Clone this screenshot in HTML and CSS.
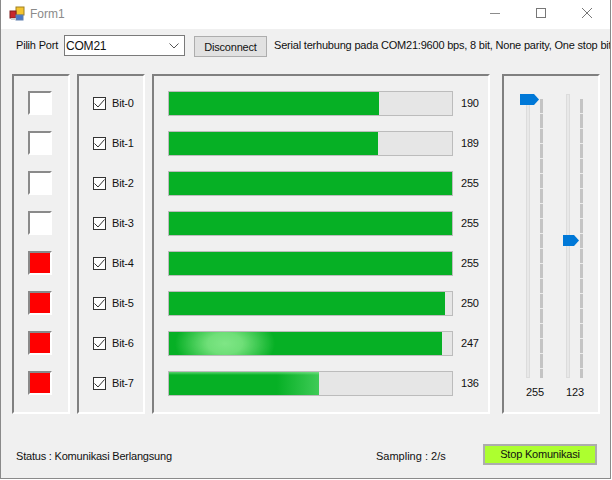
FILE: index.html
```html
<!DOCTYPE html>
<html lang="en">
<head>
    <meta charset="UTF-8">
    <title>Form1</title>
    <link rel="stylesheet" href="styles.css">
</head>
<body>
<div class="window">
    <div class="titlebar">
        <svg class="app-icon" width="16" height="16" viewBox="0 0 16 16">
            <rect x="7" y="1" width="8" height="8" fill="#f4c430" stroke="#a08020"/>
            <rect x="1" y="5" width="6" height="7" fill="#c8282c" stroke="#802020"/>
            <rect x="7" y="9" width="7" height="5" fill="#4a78c8" stroke="#6080b0"/>
            <rect x="2" y="12" width="5" height="2" fill="#d0d0d0"/>
        </svg>
        <span class="title">Form1</span>
        <div class="caption-buttons">
            <svg class="caption-btn" width="46" height="29" viewBox="0 0 46 29"><path d="M18 13.5h10" stroke="#8c8c8c" fill="none"/></svg>
            <svg class="caption-btn" width="46" height="29" viewBox="0 0 46 29"><rect x="18.5" y="8.5" width="9" height="9" stroke="#777" fill="none"/></svg>
            <svg class="caption-btn" width="46" height="29" viewBox="0 0 46 29"><path d="M18 8l10 10M28 8l-10 10" stroke="#777" fill="none"/></svg>
        </div>
    </div>
    <div class="toolbar">
        <span class="port-label">Pilih Port</span>
        <div class="combo">
            <span>COM21</span>
            <svg width="10" height="6" viewBox="0 0 10 6"><path d="M0.5 0.5L5 5l4.5-4.5" stroke="#555" fill="none"/></svg>
        </div>
        <div class="btn">Disconnect</div>
        <span class="serial-info">Serial terhubung pada COM21:9600 bps, 8 bit, None parity, One stop bit</span>
    </div>
    <div class="panels">
        <div class="panel leds">
            <div class="led"></div>
            <div class="led"></div>
            <div class="led"></div>
            <div class="led"></div>
            <div class="led on"></div>
            <div class="led on"></div>
            <div class="led on"></div>
            <div class="led on"></div>
        </div>
        <div class="panel checks">
            <label class="check"><span class="box"><svg width="11" height="9" viewBox="0 0 11 9"><path d="M0.5 4.5L4 8l6.5-7.5" stroke="#333" fill="none"/></svg></span>Bit-0</label>
            <label class="check"><span class="box"><svg width="11" height="9" viewBox="0 0 11 9"><path d="M0.5 4.5L4 8l6.5-7.5" stroke="#333" fill="none"/></svg></span>Bit-1</label>
            <label class="check"><span class="box"><svg width="11" height="9" viewBox="0 0 11 9"><path d="M0.5 4.5L4 8l6.5-7.5" stroke="#333" fill="none"/></svg></span>Bit-2</label>
            <label class="check"><span class="box"><svg width="11" height="9" viewBox="0 0 11 9"><path d="M0.5 4.5L4 8l6.5-7.5" stroke="#333" fill="none"/></svg></span>Bit-3</label>
            <label class="check"><span class="box"><svg width="11" height="9" viewBox="0 0 11 9"><path d="M0.5 4.5L4 8l6.5-7.5" stroke="#333" fill="none"/></svg></span>Bit-4</label>
            <label class="check"><span class="box"><svg width="11" height="9" viewBox="0 0 11 9"><path d="M0.5 4.5L4 8l6.5-7.5" stroke="#333" fill="none"/></svg></span>Bit-5</label>
            <label class="check"><span class="box"><svg width="11" height="9" viewBox="0 0 11 9"><path d="M0.5 4.5L4 8l6.5-7.5" stroke="#333" fill="none"/></svg></span>Bit-6</label>
            <label class="check"><span class="box"><svg width="11" height="9" viewBox="0 0 11 9"><path d="M0.5 4.5L4 8l6.5-7.5" stroke="#333" fill="none"/></svg></span>Bit-7</label>
        </div>
        <div class="panel bars">
            <div class="bar-row"><div class="bar"><div class="fill" style="width: 74.2%"></div></div><span class="value">190</span></div>
            <div class="bar-row"><div class="bar"><div class="fill" style="width: 73.8%"></div></div><span class="value">189</span></div>
            <div class="bar-row"><div class="bar"><div class="fill" style="width: 100%"></div></div><span class="value">255</span></div>
            <div class="bar-row"><div class="bar"><div class="fill" style="width: 100%"></div></div><span class="value">255</span></div>
            <div class="bar-row"><div class="bar"><div class="fill" style="width: 100%"></div></div><span class="value">255</span></div>
            <div class="bar-row"><div class="bar"><div class="fill" style="width: 97.6%"></div></div><span class="value">250</span></div>
            <div class="bar-row"><div class="bar"><div class="fill glow-a" style="width: 96.6%"></div></div><span class="value">247</span></div>
            <div class="bar-row"><div class="bar"><div class="fill glow-b" style="width: 53%"></div></div><span class="value">136</span></div>
        </div>
        <div class="panel sliders">
            <div class="slider">
                <div class="slider-body">
                    <div class="track"></div>
                    <div class="ticks"></div>
                    <svg class="thumb thumb-max" width="20" height="12" viewBox="0 0 20 12"><path d="M0 0h14l5 5.5-5 5.5H0z" fill="#0078d7"/></svg>
                </div>
                <span class="value">255</span>
            </div>
            <div class="slider">
                <div class="slider-body">
                    <div class="track"></div>
                    <div class="ticks"></div>
                    <svg class="thumb thumb-mid" width="17" height="12" viewBox="0 0 17 12"><path d="M0 0h11l5 5.5-5 5.5H0z" fill="#0078d7"/></svg>
                </div>
                <span class="value">123</span>
            </div>
        </div>
    </div>
    <div class="footer">
        <span class="status">Status : Komunikasi Berlangsung</span>
        <span class="sampling">Sampling : 2/s</span>
        <div class="stop-btn">Stop Komunikasi</div>
    </div>
</div>
</body>
</html>
```

FILE: styles.css
```css
html, body { margin: 0; padding: 0; }
body { width: 612px; height: 480px; overflow: hidden; background: #fff; font-family: "Liberation Sans", Arial, sans-serif; font-size: 11px; letter-spacing: -0.2px; color: #111; }
.window { width: 611px; height: 479px; box-sizing: border-box; border: 1px solid #8a8a8a; border-top: none; background: #f0f0f0; display: flex; flex-direction: column; overflow: hidden; }

.titlebar { height: 29px; flex: none; background: #fff; display: flex; align-items: center; padding-left: 8px; }
.app-icon { margin-right: 5px; margin-top: -1px; }
.title { color: #8a8a8a; font-size: 12px; letter-spacing: 0; margin-top: -2px; }
.caption-buttons { margin-left: auto; display: flex; }
.caption-btn { display: block; }

.toolbar { height: 45px; flex: none; box-sizing: border-box; padding: 6px 0 0 15px; display: flex; align-items: flex-start; white-space: nowrap; }
.port-label { margin-top: 4px; width: 48px; flex: none; }
.combo { width: 121px; height: 21px; box-sizing: border-box; border: 1px solid #7a7a7a; background: #fff; display: flex; align-items: center; justify-content: space-between; padding: 0 5px 0 1px; flex: none; font-size: 12px; }
.btn { width: 73px; height: 21px; box-sizing: border-box; margin: 1px 0 0 9px; border: 1px solid #adadad; background: #e1e1e1; display: flex; align-items: center; justify-content: center; flex: none; }
.serial-info { margin: 4px 0 0 7px; }

.panels { height: 340px; flex: none; display: flex; padding-left: 11px; }
.panel { box-sizing: border-box; height: 100%; border: 2px solid; border-color: #808080 #fff #fff #808080; padding-top: 7px; display: flex; flex-direction: column; }

.leds { width: 58px; align-items: center; gap: 16px; padding-right: 2px; padding-top: 15px; }
.led { width: 24px; height: 24px; flex: none; box-sizing: border-box; border: 2px solid; border-color: #8a8a8a #fff #fff #8a8a8a; background: #fff; }
.led.on { background: #f00; }

.checks { width: 68px; margin-left: 7px; padding-left: 14px; }
.check { height: 40px; flex: none; display: flex; align-items: center; }
.box { width: 13px; height: 13px; box-sizing: border-box; border: 1px solid #333; background: #fff; margin-right: 6px; display: flex; align-items: center; justify-content: center; flex: none; }

.bars { width: 338px; margin-left: 7px; padding-left: 14px; }
.bar-row { height: 40px; flex: none; display: flex; align-items: center; }
.bar { width: 285px; height: 25px; flex: none; box-sizing: border-box; border: 1px solid #bcbcbc; background: #e6e6e6; }
.fill { height: 100%; background: #06b025; }
.glow-a { background: radial-gradient(ellipse 50px 30px at 56px 50%, #7fe686 0%, #6fdf78 35%, rgba(6,176,37,0) 100%), #06b025; }
.glow-b { background: linear-gradient(180deg, rgba(150,235,160,0.6) 0, rgba(6,176,37,0) 3px), linear-gradient(90deg, #06b025 72%, #3fcb57 100%); }
.value { margin-left: 8px; }

.sliders { width: 98px; margin-left: 12px; padding: 0; flex-direction: row; }
.slider { width: 40px; flex: none; position: relative; display: flex; flex-direction: column; align-items: center; }
.slider:first-child { margin-left: 11px; }
.slider-body { position: relative; width: 40px; height: 290px; flex: none; margin-top: 18px; }
.track { position: absolute; left: 11px; top: 0; width: 4px; height: 284px; box-sizing: border-box; border: 1px solid #dcdcdc; background: #e8e8e8; }
.ticks { position: absolute; left: 25px; top: 5px; width: 3px; height: 279px; background: repeating-linear-gradient(180deg, #c4c4c4 0, #c4c4c4 14px, #ececec 14px, #ececec 15px); }
.thumb { position: absolute; display: block; }
.thumb-max { left: 5px; top: 0; }
.thumb-mid { left: 8px; top: 141px; }
.slider .value { margin-left: 0; margin-top: 2px; }

.footer { flex: 1; display: flex; align-items: center; padding: 8px 13px 0 15px; }
.status { width: 360px; flex: none; margin-top: 12px; }
.sampling { flex: 1; margin-top: 12px; letter-spacing: 0; }
.stop-btn { width: 114px; height: 21px; flex: none; margin-top: 8px; box-sizing: border-box; border: 2px solid #adadad; background: #adff2f; display: flex; align-items: center; justify-content: center; }
```
